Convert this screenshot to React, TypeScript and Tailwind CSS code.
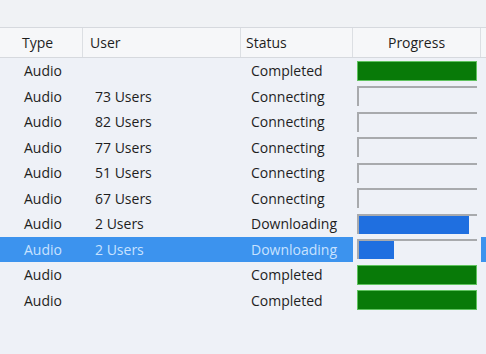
import React from "react";

type Row = {
  type: string;
  users: string;
  status: string;
  kind: "done" | "empty" | "blue";
  pct?: number;
  selected?: boolean;
};

const rows: Row[] = [
  { type: "Audio", users: "", status: "Completed", kind: "done" },
  { type: "Audio", users: "73 Users", status: "Connecting", kind: "empty" },
  { type: "Audio", users: "82 Users", status: "Connecting", kind: "empty" },
  { type: "Audio", users: "77 Users", status: "Connecting", kind: "empty" },
  { type: "Audio", users: "51 Users", status: "Connecting", kind: "empty" },
  { type: "Audio", users: "67 Users", status: "Connecting", kind: "empty" },
  { type: "Audio", users: "2 Users", status: "Downloading", kind: "blue", pct: 93 },
  { type: "Audio", users: "2 Users", status: "Downloading", kind: "blue", pct: 30, selected: true },
  { type: "Audio", users: "", status: "Completed", kind: "done" },
  { type: "Audio", users: "", status: "Completed", kind: "done" },
];

function Progress({ row }: { row: Row }) {
  if (row.kind === "done") {
    return <div className="ml-[4px] h-[20px] w-[120px] border border-[#5fc35f] bg-[#087a08]" />;
  }
  return (
    <div className="ml-[4px] h-[20px] w-[120px] border-t-2 border-l-2 border-[#a8aaad]">
      {row.kind === "blue" && (
        <div className="h-[18px] bg-[#1f6fe0]" style={{ width: `${row.pct}%` }} />
      )}
    </div>
  );
}

export default function App() {
  return (
    <div
      className="w-[486px] h-[354px] overflow-hidden bg-[#eef1f7] text-[14px] text-[#1e1e1e]"
      style={{ fontFamily: '"Open Sans", "Noto Sans", sans-serif' }}
    >
      <div className="h-[27px] bg-[#f0f2f5]" />

      {/* header */}
      <div className="flex h-[31px] items-center border-y border-[#d6d9de] bg-[#f6f7f9]">
        <div className="w-[83px] pl-[22px] h-full flex items-center border-r border-[#dcdfe3]">Type</div>
        <div className="w-[158px] pl-[7px] h-full flex items-center border-r border-[#dcdfe3]">User</div>
        <div className="w-[112px] pl-[5px] h-full flex items-center border-r border-[#dcdfe3]">Status</div>
        <div className="w-[128px] h-full flex items-center justify-center border-r border-[#dcdfe3]">Progress</div>
        <div className="flex-1" />
      </div>

      {rows.map((r, i) => (
        <div key={i} className="flex h-[25.5px] items-center">
          <div className={`flex h-full w-[353px] items-center ${r.selected ? "bg-[#3c93ee] text-[#c8e2ff]" : ""}`}>
            <div className="w-[83px] pl-[24px]">{r.type}</div>
            <div className="w-[158px] pl-[12px]">{r.users}</div>
            <div className="w-[112px] pl-[10px]">{r.status}</div>
          </div>
          <div className="w-[128px] h-full flex items-center">
            <Progress row={r} />
          </div>
          <div className={`flex-1 h-full ${r.selected ? "bg-[#3c93ee]" : ""}`} />
        </div>
      ))}
    </div>
  );
}
